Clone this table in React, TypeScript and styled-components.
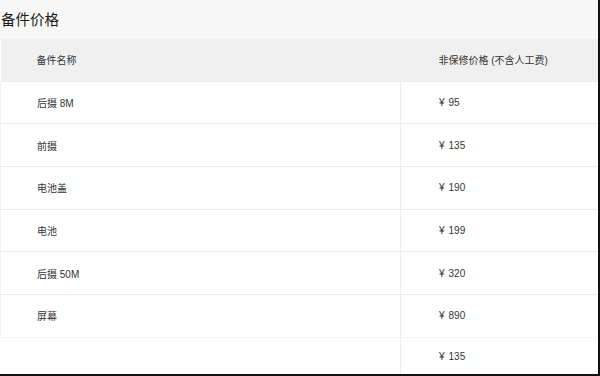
import styled, { createGlobalStyle } from 'styled-components';

const GlobalStyle = createGlobalStyle`
  html, body {
    margin: 0;
    padding: 0;
    background: #fff;
  }
  body {
    font-family: "Liberation Sans", "Noto Sans CJK SC", sans-serif;
  }
`;

type Part = {
  name: string;
  price: string;
  faint?: boolean;
};

const parts: Part[] = [
  { name: '后摄 8M', price: '95' },
  { name: '前摄', price: '135' },
  { name: '电池盖', price: '190' },
  { name: '电池', price: '199' },
  { name: '后摄 50M', price: '320' },
  { name: '屏幕', price: '890' },
  { name: '', price: '135', faint: true },
];

const App = () => {
  return (
    <>
      <GlobalStyle />
      <Page>
        <TitleBar>备件价格</TitleBar>
        <PriceTable>
          <thead>
            <tr>
              <HeadCell>备件名称</HeadCell>
              <HeadCell second>非保修价格 (不含人工费)</HeadCell>
            </tr>
          </thead>
          <tbody>
            {parts.map((part, i) => (
              <Row key={i} faint={part.faint}>
                <NameCell faint={part.faint}>{part.name}</NameCell>
                <PriceCell faint={part.faint}>
                  <Yen>¥</Yen>
                  {part.price}
                </PriceCell>
              </Row>
            ))}
          </tbody>
        </PriceTable>
      </Page>
    </>
  );
};

const Page = styled.div`
  width: 600px;
  height: 376px;
  box-sizing: border-box;
  border-right: 2px solid #111;
  border-bottom: 2px solid #111;
  overflow: hidden;
  background: #fff;
`;

const TitleBar = styled.div`
  height: 39px;
  background: #f7f7f7;
  display: flex;
  align-items: center;
  padding-left: 1px;
  padding-bottom: 2px;
  box-sizing: border-box;
  font-size: 14.5px;
  color: #1a1a1a;
`;

const PriceTable = styled.table`
  width: 100%;
  border-collapse: collapse;
  table-layout: fixed;
  font-size: 10px;
  color: #333;
`;

const HeadCell = styled.th<{ second?: boolean }>`
  height: 42px;
  padding: 0 0 0 ${(props) => (props.second ? '38px' : '36px')};
  width: ${(props) => (props.second ? 'auto' : '400px')};
  box-sizing: border-box;
  background: #f0f0f0;
  font-weight: normal;
  text-align: left;
  color: #333;
`;

const Row = styled.tr<{ faint?: boolean }>`
  height: 42.7px;
  border-top: 1px solid ${(props) => (props.faint ? '#f5f5f5' : '#ececec')};
`;

const NameCell = styled.td<{ faint?: boolean }>`
  padding: 0 0 0 36px;
  border-left: 1px solid ${(props) => (props.faint ? '#fff' : '#f2f2f2')};
`;

const PriceCell = styled.td<{ faint?: boolean }>`
  padding: 0 0 ${(props) => (props.faint ? '4px' : '0')} 38px;
  border-left: 1px solid #ececec;
`;

const Yen = styled.span`
  margin-right: 4px;
`;

export default App;
